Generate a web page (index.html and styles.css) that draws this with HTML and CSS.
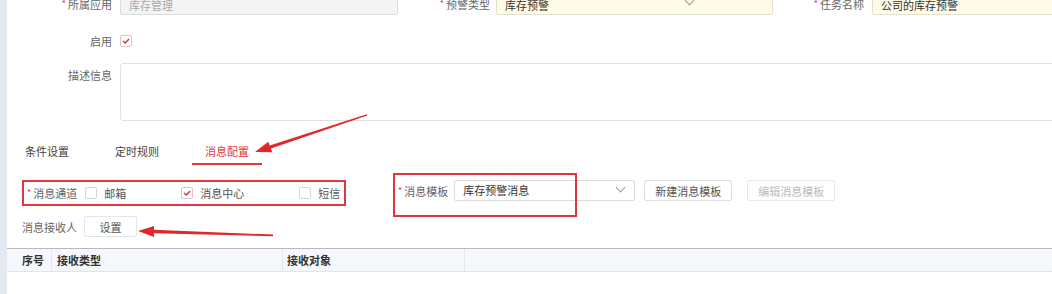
FILE: index.html
```html
<!DOCTYPE html>
<html lang="zh">
<head>
    <meta charset="UTF-8">
    <title>预警任务</title>
    <link rel="stylesheet" href="styles.css">
</head>
<body>
    <div class="pagina">
        <div class="lateral"></div>
        <main class="contenido">
            <div class="fila filaTop">
                <label class="etiqueta et1"><span class="req">*</span>所属应用</label>
                <div class="campo campoDis in1">库存管理</div>
                <label class="etiqueta et2"><span class="req">*</span>预警类型</label>
                <div class="campo campoAma in2">库存预警<span class="flecha"></span></div>
                <label class="etiqueta et3"><span class="req">*</span>任务名称</label>
                <div class="campo campoAma in3">公司的库存预警</div>
            </div>
            <div class="fila filaCheck">
                <label class="etiqueta et1">启用</label>
                <span class="caja marcada"><svg width="10" height="10" viewBox="0 0 10 10"><polyline points="2,5 4.3,7 8,3" fill="none" stroke="#d9333f" stroke-width="1.4"/></svg></span>
            </div>
            <div class="fila filaDesc">
                <label class="etiqueta et1">描述信息</label>
                <div class="areaTexto"></div>
            </div>
            <div class="tabs">
                <span class="tab">条件设置</span>
                <span class="tab">定时规则</span>
                <span class="tab activo">消息配置</span>
            </div>
            <div class="filaMsg">
                <div class="canales">
                    <span class="canalTit"><span class="req">*</span>消息通道</span>
                    <span class="caja"></span><span class="opcion op1">邮箱</span>
                    <span class="caja marcada"><svg width="10" height="10" viewBox="0 0 10 10"><polyline points="2,5 4.3,7 8,3" fill="none" stroke="#d9333f" stroke-width="1.4"/></svg></span><span class="opcion op2">消息中心</span>
                    <span class="caja"></span><span class="opcion">短信</span>
                </div>
                <div class="plantilla">
                    <span class="plantTit"><span class="req">*</span>消息模板</span>
                    <div class="campo selPlant">库存预警消息<span class="flecha"></span></div>
                    <button class="boton">新建消息模板</button>
                    <button class="boton botonDis">编辑消息模板</button>
                </div>
            </div>
            <div class="filaRec">
                <span class="recTit">消息接收人</span>
                <button class="boton botonSet">设置</button>
            </div>
            <div class="tabla">
                <div class="celda c1">序号</div>
                <div class="celda c2">接收类型</div>
                <div class="celda c3">接收对象</div>
                <div class="celda c4"></div>
            </div>
        </main>
    </div>
    <div class="marcoRojo"></div>
    <svg class="flechas" width="1052" height="294" viewBox="0 0 1052 294">
        <polygon points="366.8,114.2 269.7,145.4 268.3,141.8 255,152 272.1,152.2 270.9,148.6 367.3,115.6" fill="#e3262b"/>
        <polygon points="273,234.6 154,229.8 154,226 138,231 154,237 154,233.2 273,236.2" fill="#e3262b"/>
    </svg>
</body>
</html>
```

FILE: styles.css
```css
* {
    box-sizing: border-box;
    font-family: "Noto Sans CJK SC", "Noto Sans", sans-serif;
}
body {
    margin: 0;
    width: 1052px;
    height: 294px;
    overflow: hidden;
    background: white;
    position: relative;
    font-size: 11px;
    color: #666;
}
.pagina {
    display: flex;
    height: 100%;
}
.lateral {
    width: 7px;
    flex: none;
    background-color: #e5e9f1;
}
.contenido {
    flex: 1;
    min-width: 0;
}
.fila {
    display: flex;
    align-items: center;
}
.filaTop {
    margin-top: -5px;
    height: 20px;
}
.etiqueta {
    text-align: right;
    flex: none;
    line-height: 14px;
}
.req {
    color: #e53935;
    font-size: 9px;
    margin-right: 2px;
    position: relative;
    top: -2px;
}
.et1 {
    width: 105px;
    margin-right: 8px;
}
.et2 {
    width: 92px;
    margin-right: 6px;
}
.et3 {
    width: 91px;
    margin-right: 8px;
}
.campo {
    height: 20px;
    line-height: 18px;
    border: 1px solid #dcdcdc;
    border-radius: 2px;
    padding: 0 8px;
    flex: none;
    position: relative;
    color: #333;
}
.campoDis {
    background-color: #f4f4f4;
    color: #aaa;
}
.campoAma {
    background-color: #fffbe9;
    border-color: #e6e1cc;
}
.in1 {
    width: 278px;
}
.in2 {
    width: 277px;
}
.in3 {
    width: 200px;
}
.flecha {
    position: absolute;
    right: 12px;
    top: 3px;
    width: 7px;
    height: 7px;
    border-right: 1px solid #999;
    border-bottom: 1px solid #999;
    transform: rotate(45deg);
}
.in2 .flecha {
    right: 79px;
    top: 1px;
}
.filaCheck {
    margin-top: 16px;
    height: 20px;
}
.caja {
    width: 12px;
    height: 12px;
    border: 1px solid #d4d4d4;
    border-radius: 2px;
    background: white;
    flex: none;
    display: flex;
    align-items: center;
    justify-content: center;
}
.marcada {
    border-color: #e2c3c8;
}
.filaDesc {
    margin-top: 12px;
    align-items: flex-start;
}
.filaDesc .etiqueta {
    margin-top: 5px;
}
.areaTexto {
    width: 960px;
    height: 58px;
    flex: none;
    border: 1px solid #e0e0e0;
    border-radius: 3px;
}
.tabs {
    display: flex;
    gap: 20px;
    margin-top: 18px;
    padding-left: 5px;
}
.tab {
    width: 70px;
    height: 26px;
    line-height: 24px;
    text-align: center;
    color: #444;
    border-bottom: 2px solid transparent;
}
.tab.activo {
    color: #e4393c;
    border-bottom-color: #e4393c;
}
.filaMsg {
    display: flex;
    align-items: flex-start;
    margin-top: 15px;
    padding-left: 15px;
}
.canales {
    width: 324px;
    height: 26px;
    border: 2px solid #e0353a;
    display: flex;
    align-items: center;
    padding-left: 3px;
    flex: none;
}
.canalTit {
    margin-right: 8px;
}
.canales .caja {
    margin-right: 7px;
}
.opcion {
    color: #555;
}
.op1 {
    width: 77px;
}
.op2 {
    width: 99px;
}
.plantilla {
    display: flex;
    align-items: center;
    margin-left: 52px;
}
.plantTit {
    margin-right: 6px;
}
.selPlant {
    width: 181px;
    height: 21px;
    line-height: 19px;
}
.selPlant .flecha {
    top: 3px;
    right: 10px;
}
.boton {
    height: 21px;
    border: 1px solid #dedede;
    border-radius: 2px;
    background: white;
    color: #555;
    font-size: 11px;
    padding: 0;
    width: 88px;
    margin-left: 9px;
}
.botonDis {
    color: #bbb;
    border-color: #e8e8e8;
    margin-left: 15px;
}
.filaRec {
    display: flex;
    align-items: center;
    margin-top: 10px;
    padding-left: 15px;
}
.recTit {
    margin-right: 7px;
}
.botonSet {
    width: 53px;
    margin-left: 0;
    border-color: #e6e6e6;
}
.tabla {
    display: flex;
    margin-top: 11px;
    height: 24px;
    border-top: 1px solid #b9b9bd;
    border-bottom: 1px solid #dfe6ea;
    background: linear-gradient(#f8f7fe, #f3f8fb);
}
.celda {
    line-height: 22px;
    font-weight: bold;
    color: #333;
    border-right: 1px solid #e4e6ea;
}
.c1 {
    width: 45px;
    padding-left: 15px;
}
.c2 {
    width: 231px;
    padding-left: 5px;
}
.c3 {
    width: 182px;
    padding-left: 4px;
}
.c4 {
    flex: 1;
    border-right: none;
}
.marcoRojo {
    position: absolute;
    left: 393px;
    top: 173px;
    width: 184px;
    height: 44px;
    border: 2px solid #e0353a;
}
.flechas {
    position: absolute;
    left: 0;
    top: 0;
}
```
